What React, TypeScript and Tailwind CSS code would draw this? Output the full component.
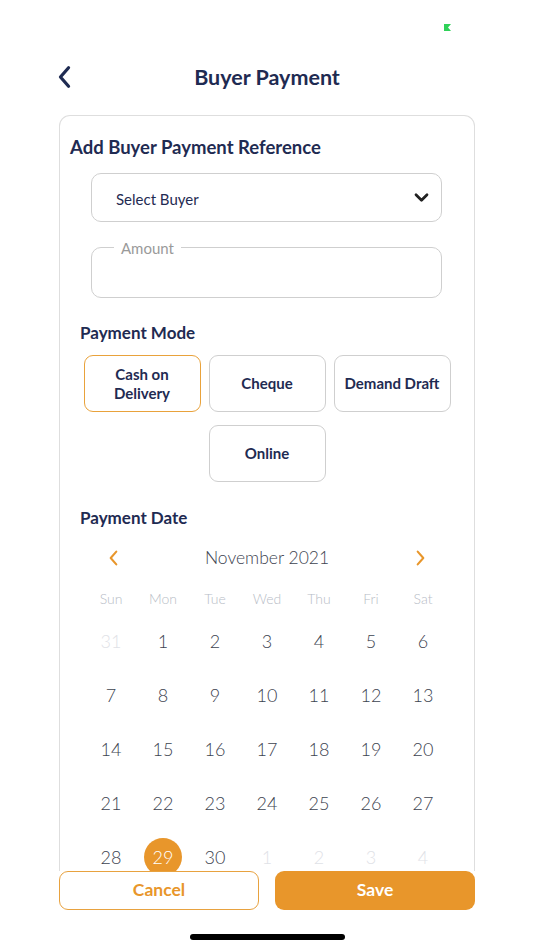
import React from "react";

const NAVY = "text-[#1f2b52]";

function Chevron({ dir, className }: { dir: "left" | "right" | "down"; className?: string }) {
  const d =
    dir === "left" ? "M10 2 L3 10 L10 18" : dir === "right" ? "M3 2 L10 10 L3 18" : "M2 3 L8 9 L14 3";
  const vb = dir === "down" ? "0 0 16 12" : "0 0 13 20";
  return (
    <svg viewBox={vb} className={className} fill="none" stroke="currentColor" strokeLinecap="round" strokeLinejoin="round">
      <path d={d} />
    </svg>
  );
}

const weeks: { n: number; dim?: boolean; sel?: boolean }[][] = [
  [{ n: 31, dim: true }, { n: 1 }, { n: 2 }, { n: 3 }, { n: 4 }, { n: 5 }, { n: 6 }],
  [{ n: 7 }, { n: 8 }, { n: 9 }, { n: 10 }, { n: 11 }, { n: 12 }, { n: 13 }],
  [{ n: 14 }, { n: 15 }, { n: 16 }, { n: 17 }, { n: 18 }, { n: 19 }, { n: 20 }],
  [{ n: 21 }, { n: 22 }, { n: 23 }, { n: 24 }, { n: 25 }, { n: 26 }, { n: 27 }],
  [{ n: 28 }, { n: 29, sel: true }, { n: 30 }, { n: 1, dim: true }, { n: 2, dim: true }, { n: 3, dim: true }, { n: 4, dim: true }],
];

const days = ["Sun", "Mon", "Tue", "Wed", "Thu", "Fri", "Sat"];

function ModeButton({ label, active }: { label: React.ReactNode; active?: boolean }) {
  return (
    <div
      className={`w-[117px] h-[57px] rounded-[9px] border flex items-center justify-center text-center text-[15px] font-bold leading-[19px] ${NAVY} ${
        active ? "border-[#e9a23b]" : "border-[#cfcfcf]"
      }`}
    >
      {label}
    </div>
  );
}

export default function App() {
  return (
    <div className="w-[534px] h-[950px] bg-white overflow-hidden flex flex-col" style={{ fontFamily: "Lato, 'Open Sans', sans-serif" }}>
      {/* status bar */}
      <div className="h-[52px] flex justify-end pr-[83px] pt-[24px]">
        <svg width="7" height="7" viewBox="0 0 7 7">
          <path d="M0 0 H7 L4 3.5 L7 7 H0 Z" fill="#2fd158" />
        </svg>
      </div>

      {/* header */}
      <div className="relative h-[50px] flex items-center justify-center">
        <Chevron dir="left" className={`absolute left-[57px] top-[13px] w-[15px] h-[24px] stroke-[2.8] ${NAVY}`} />
        <div className={`text-[21.5px] font-bold ${NAVY}`}>Buyer Payment</div>
      </div>

      {/* card */}
      <div className="mt-[13px] mx-[59px] h-[756px] overflow-hidden rounded-t-[11px] border border-b-0 border-[#dedede] pt-[19px]">
        <div className={`pl-[10px] text-[18.5px] font-bold leading-[24px] ${NAVY}`}>Add Buyer Payment Reference</div>

        <div className="mt-[14px] ml-[31px] w-[351px] h-[49px] rounded-[10px] border border-[#cfcfcf] flex items-center justify-between pl-[24px] pr-[12px]">
          <span className={`text-[15px] leading-[20px] pt-[2px] ${NAVY}`}>Select Buyer</span>
          <Chevron dir="down" className="w-[15px] h-[11px] stroke-[3] text-[#222]" />
        </div>

        <div className="relative mt-[25px] ml-[31px] w-[351px] h-[51px] rounded-[10px] border border-[#cfcfcf]">
          <span className="absolute left-[22px] -top-[10px] bg-white px-[7px] text-[15px] leading-[20px] text-[#9a9a9a]">Amount</span>
        </div>

        <div className={`mt-[24px] pl-[20px] text-[17px] font-bold leading-[22px] ${NAVY}`}>Payment Mode</div>

        <div className="mt-[11px] flex flex-col items-center gap-[13px]">
          <div className="flex gap-[8px]">
            <ModeButton label={<>Cash on<br />Delivery</>} active />
            <ModeButton label="Cheque" />
            <ModeButton label="Demand Draft" />
          </div>
          <ModeButton label="Online" />
        </div>

        <div className={`mt-[25px] pl-[20px] text-[17px] font-bold leading-[22px] ${NAVY}`}>Payment Date</div>

        {/* calendar */}
        <div className="mt-[17px] mx-auto w-[364px]">
          <div className="relative h-[24px] flex items-center justify-center">
            <Chevron dir="left" className="absolute left-[23px] top-[4px] w-[11px] h-[16px] stroke-[2.6] text-[#e8962b]" />
            <span className="text-[17.5px] font-light text-[#3d4350]">November 2021</span>
            <Chevron dir="right" className="absolute right-[23px] top-[4px] w-[11px] h-[16px] stroke-[2.6] text-[#e8962b]" />
          </div>
          <div className="mt-[13px] grid grid-cols-7 h-[30px] items-center">
            {days.map((d) => (
              <div key={d} className="text-center text-[14px] font-light text-[#b7bcc6]">
                {d}
              </div>
            ))}
          </div>
          <div className="mt-[2px]">
            {weeks.map((w, i) => (
              <div key={i} className="grid grid-cols-7 h-[53.8px] items-center">
                {w.map((c, j) => (
                  <div key={j} className="flex justify-center">
                    {c.sel ? (
                      <div className="w-[38px] h-[38px] rounded-full bg-[#e8962b] flex items-center justify-center text-[18px] font-light text-white">
                        {c.n}
                      </div>
                    ) : (
                      <span className={`text-[18px] font-light ${c.dim ? "text-[#dfe2e7]" : "text-[#3d4350]"}`}>{c.n}</span>
                    )}
                  </div>
                ))}
              </div>
            ))}
          </div>
        </div>
      </div>

      {/* buttons */}
      <div className="mx-[59px] flex gap-[16px]">
        <div className="w-[200px] h-[39px] rounded-[9px] border border-[#e8a23f] bg-white flex items-center justify-center text-[17.5px] font-bold text-[#e8962b]">
          Cancel
        </div>
        <div className="w-[200px] h-[39px] rounded-[9px] bg-[#e8962b] flex items-center justify-center text-[17.5px] font-bold text-white">
          Save
        </div>
      </div>

      <div className="mt-[24px] mx-auto w-[155px] h-[6px] rounded-full bg-black" />
    </div>
  );
}
